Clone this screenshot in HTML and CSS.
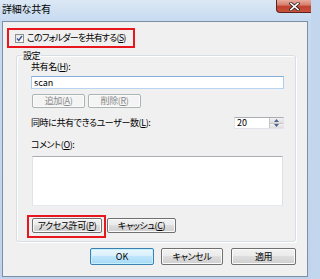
FILE: index.html
```html
<!DOCTYPE html>
<html lang="ja">
<head>
<meta charset="utf-8">
<title>詳細な共有</title>
<link rel="stylesheet" href="styles.css">
</head>
<body>
<div class="window">
  <div class="titlebar">
    <span class="title">詳細な共有</span>
    <div class="close">
      <svg width="11" height="9" viewBox="0 0 11 9">
        <path d="M2 1.5 L9 7.5 M9 1.5 L2 7.5" stroke="#3a2a2a" stroke-width="3.2" stroke-linecap="square"/>
        <path d="M2 1.5 L9 7.5 M9 1.5 L2 7.5" stroke="#ffffff" stroke-width="1.6" stroke-linecap="square"/>
      </svg>
    </div>
  </div>
  <div class="client">
    <div class="share-row">
      <label class="mark share-check">
        <span class="checkbox">
          <svg width="7" height="7" viewBox="0 0 7 7"><path d="M1 3.6 L2.8 5.5 L6 1" fill="none" stroke="#3d5595" stroke-width="1.4"/></svg>
        </span>
        <span class="share-text">このフォルダーを共有する(<u>S</u>)</span>
      </label>
    </div>
    <fieldset class="group">
      <legend>設定</legend>
      <div class="label">共有名(<u>H</u>):</div>
      <div class="textbox name-box">scan</div>
      <div class="btn-row">
        <button class="btn disabled add">追加(<u>A</u>)</button>
        <button class="btn disabled del">削除(<u>R</u>)</button>
      </div>
      <div class="limit-row">
        <span class="label">同時に共有できるユーザー数(<u>L</u>):</span>
        <div class="spin">
          <span class="spin-value">20</span>
          <span class="spin-btns">
            <span class="spin-btn"><svg width="5" height="3" viewBox="0 0 5 3"><path d="M0 3 L2.5 0 L5 3Z" fill="#4d6290"/></svg></span>
            <span class="spin-btn"><svg width="5" height="3" viewBox="0 0 5 3"><path d="M0 0 L2.5 3 L5 0Z" fill="#4d6290"/></svg></span>
          </span>
        </div>
      </div>
      <div class="label comment-label">コメント(<u>O</u>):</div>
      <div class="textbox comment-box"></div>
      <div class="perm-row">
        <div class="mark perm-mark">
          <button class="btn perm">アクセス許可(<u>P</u>)</button>
        </div>
        <button class="btn cache">キャッシュ(<u>C</u>)</button>
      </div>
    </fieldset>
    <div class="footer">
      <button class="btn default ok">OK</button>
      <button class="btn cancel">キャンセル</button>
      <button class="btn apply">適用</button>
    </div>
  </div>
</div>
</body>
</html>
```
FILE: styles.css
```css
html, body {
  margin: 0;
  padding: 0;
}
body {
  width: 311px;
  height: 279px;
  overflow: hidden;
  font-family: "Noto Sans CJK JP", "Noto Sans", sans-serif;
  font-size: 9px;
  letter-spacing: -0.4px;
  font-feature-settings: "palt";
  color: #000;
  background: #c2d6ed;
  white-space: nowrap;
}
u {
  text-decoration: underline;
  text-underline-offset: 1px;
}
.window {
  height: 279px;
  display: flex;
  flex-direction: column;
  background: linear-gradient(to bottom, #dce8f5 0px, #c6daf0 21px, #bfd4ec 100%);
}
.titlebar {
  height: 21px;
  display: flex;
  justify-content: space-between;
  align-items: flex-start;
  flex: none;
}
.title {
  padding: 2px 0 0 2px;
  font-size: 10px;
  line-height: 13px;
  letter-spacing: -0.2px;
}
.close {
  width: 35px;
  height: 13px;
  box-sizing: border-box;
  border: 1px solid #5b2620;
  border-top: none;
  border-right: none;
  border-radius: 0 0 0 4px;
  background: linear-gradient(to bottom, #e8ab9d 0%, #d9806f 40%, #c0412e 55%, #c8533d 100%);
  display: flex;
  align-items: center;
  justify-content: center;
}
.close svg { display: block; }
.client {
  flex: none;
  margin: 0 3px 0 2px;
  height: 256px;
  box-sizing: border-box;
  border: 1px solid #7f8fa3;
  background: #f0f0f0;
  display: flex;
  flex-direction: column;
}
.mark {
  border: 2px solid #e8161d;
  box-sizing: border-box;
}
.share-row {
  display: flex;
  padding: 6px 0 0 4px;
}
.share-check {
  width: 128px;
  height: 20px;
  display: flex;
  align-items: center;
  padding-left: 6px;
  gap: 3px;
  line-height: 12px;
}
.share-text {
  letter-spacing: -0.8px;
}
.checkbox {
  width: 9px;
  height: 9px;
  box-sizing: border-box;
  border: 1px solid #8e8f8f;
  background: linear-gradient(to bottom right, #e4e4e4, #ffffff);
  display: flex;
  align-items: center;
  justify-content: center;
}
.checkbox svg { display: block; }
.group {
  margin: 2px 11px 0 13px;
  padding: 0 11px 3px 14px;
  border: 1px solid #d5dfe5;
  border-radius: 3px;
  box-shadow: inset 1px 1px 0 #ffffff, 1px 1px 0 #ffffff;
  min-width: 0;
}
.group legend {
  padding: 0 1px;
  margin-left: -9px;
  line-height: 11px;
}
.label {
  line-height: 12px;
}
.textbox {
  box-sizing: border-box;
  background: #fff;
  border: 1px solid #abadb3;
  border-color: #abadb3 #dbdfe6 #e3e9ef #e2e3ea;
}
.name-box {
  margin-top: 3px;
  height: 13px;
  border-color: #85addb #a9cbee #b7d5f3 #a9cbee;
  line-height: 11px;
  padding-left: 2px;
  letter-spacing: 0;
}
.btn {
  box-sizing: border-box;
  font-family: inherit;
  font-size: 9px;
  letter-spacing: -0.4px;
  font-feature-settings: "palt";
  color: #000;
  padding: 0;
  line-height: 12px;
  border: 1px solid #707070;
  border-radius: 2px;
  background: linear-gradient(to bottom, #f2f2f2 0%, #ebebeb 45%, #dddddd 50%, #cfcfcf 100%);
  box-shadow: inset 0 0 0 1px #fbfbfb;
  white-space: nowrap;
}
.btn.disabled {
  color: #8b8b8b;
  border-color: #adb2b5;
  background: #f4f4f4;
}
.btn-row {
  margin-top: 5px;
  display: flex;
  gap: 3px;
  padding-left: 1px;
}
.add { width: 53px; height: 14px; }
.del { width: 53px; height: 14px; }
.limit-row {
  margin-top: 9px;
  height: 12px;
  display: flex;
  justify-content: space-between;
  align-items: center;
}
.spin {
  width: 50px;
  height: 12px;
  display: flex;
  background: #fff;
  box-sizing: border-box;
  border: 1px solid #e2e3ea;
  border-top-color: #abadb3;
}
.spin-value {
  flex: 1;
  padding-left: 2px;
  line-height: 10px;
  letter-spacing: 0;
}
.spin-btns {
  width: 13px;
  display: flex;
  flex-direction: column;
  border-left: 1px solid #c5c5c5;
}
.spin-btn {
  flex: 1;
  display: flex;
  align-items: center;
  justify-content: center;
  background: linear-gradient(to bottom, #f3f3f3, #dcdcdc);
}
.spin-btn + .spin-btn { border-top: 1px solid #c5c5c5; }
.spin-btn svg { display: block; }
.comment-label {
  margin-top: 10px;
}
.comment-box {
  margin: 5px 1px 0 1px;
  height: 50px;
}
.perm-row {
  margin-top: 9px;
  margin-left: -4px;
  display: flex;
  align-items: flex-start;
}
.perm-mark {
  padding: 1px 2px 3px 3px;
}
.perm { width: 70px; height: 15px; display: block; }
.cache { width: 69px; height: 15px; margin: 3px 0 0 1px; }
.footer {
  margin-top: 6px;
  display: flex;
  justify-content: flex-end;
  padding-right: 11px;
}
.footer .btn { height: 17px; }
.ok { width: 64px; letter-spacing: 0; }
.cancel { width: 62px; margin-left: 7px; }
.apply { width: 65px; margin-left: 8px; }
.btn.default {
  border-color: #3c7fb1;
  background: linear-gradient(to bottom, #eaf6fd 0%, #d9f0fc 45%, #bee6fd 50%, #a7d9f5 100%);
  box-shadow: inset 0 0 0 1px #c4f1fe;
}
```
